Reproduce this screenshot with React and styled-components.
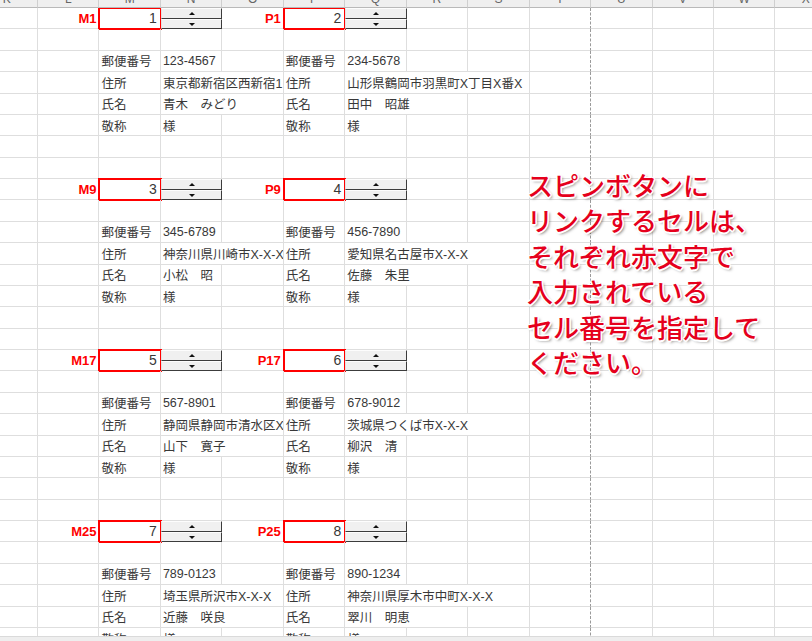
import React from "react";
import styled, { createGlobalStyle } from "styled-components";

const COL_W = 61.46;
const ROW_H = 21.375;
const COLS = 14;
const ROWS = 30;
const PAGE_BREAK_COL = 9;
const LETTERS = ["K", "L", "M", "N", "O", "P", "Q", "R", "S", "T", "U", "V", "W", "X"];

const GlobalStyle = createGlobalStyle`
  html, body { margin: 0; padding: 0; background: #fff; }
  body { font-family: "Liberation Sans", "Noto Sans CJK JP", sans-serif; }
`;

const Page = styled.div`
  position: relative;
  width: 812px;
  height: 641px;
  overflow: hidden;
  display: flex;
  flex-direction: column;
  background: #fff;
`;

const ColumnHeader = styled.div`
  flex: none;
  display: grid;
  grid-template-columns: repeat(${COLS}, ${COL_W}px);
  height: 8px;
  margin-left: -23.46px;
  background: #efefef;
`;

const HeaderCell = styled.div`
  box-sizing: border-box;
  height: 8px;
  overflow: hidden;
  display: flex;
  align-items: flex-end;
  justify-content: center;
  border-right: 1px solid #cfcfcf;
  border-bottom: 1px solid #b9b9b9;
  color: #666;
  font-size: 12px;
  span {
    line-height: 12px;
    margin-bottom: 2.5px;
  }
`;

const Sheet = styled.div`
  flex: 1;
  overflow: hidden;
`;

const SheetGrid = styled.div`
  display: grid;
  grid-template-columns: repeat(${COLS}, ${COL_W}px);
  grid-auto-rows: ${ROW_H}px;
  margin-left: -23.46px;
`;

const Cell = styled.div`
  box-sizing: border-box;
  grid-column: span ${(p) => p.$span || 1};
  display: flex;
  align-items: center;
  justify-content: ${(p) => (p.$right ? "flex-end" : "flex-start")};
  padding: 0 2px;
  border-right: 1px ${(p) => (p.$dashed ? "dashed #9a9a9a" : "solid #dedede")};
  border-bottom: 1px solid #dedede;
  white-space: nowrap;
  overflow: hidden;
  font-size: 12.5px;
  color: #383838;
`;

const RefLabel = styled(Cell)`
  justify-content: flex-end;
  padding-right: 2px;
  color: #ff0000;
  font-weight: bold;
  font-size: 13px;
`;

const LinkCell = styled(Cell)`
  justify-content: flex-end;
  padding-right: 3px;
  font-size: 14px;
  outline: 2px solid #ff0000;
  outline-offset: -1px;
  overflow: visible;
`;

const SpinCell = styled(Cell)`
  position: relative;
  overflow: visible;
`;

const Spinner = styled.div`
  position: absolute;
  top: 0;
  left: 0;
  right: -1px;
  bottom: -1px;
  z-index: 1;
  display: flex;
  flex-direction: column;
`;

const SpinHalf = styled.div`
  box-sizing: border-box;
  flex: 1;
  display: flex;
  align-items: center;
  justify-content: center;
  background: #f0f0f0;
  border-top: 1px solid #fdfdfd;
  border-left: 1px solid #e2e2e2;
  border-right: 1.5px solid #3c3c3c;
  border-bottom: 1.5px solid #3c3c3c;
`;

const Arrow = styled.div`
  width: 0;
  height: 0;
  border-left: 3px solid transparent;
  border-right: 3px solid transparent;
  ${(p) =>
    p.$down ? "border-top: 3px solid #111;" : "border-bottom: 3px solid #111;"}
`;

const BottomBar = styled.div`
  flex: none;
  height: 5px;
  box-sizing: border-box;
  background: #eeeeee;
  border-top: 1px solid #dadada;
`;

const Callout = styled.div`
  position: absolute;
  left: 527px;
  top: 167px;
  z-index: 2;
  font-family: "Noto Sans CJK JP", sans-serif;
  font-size: 26px;
  font-weight: 500;
  line-height: 35.4px;
  color: #e5001c;
  white-space: nowrap;
  text-shadow: 1px 1px 0 #fff, -1px -1px 0 #fff, 1px -1px 0 #fff,
    -1px 1px 0 #fff, 0 1.5px 0 #fff, 1.5px 0 0 #fff, 0 -1.5px 0 #fff,
    -1.5px 0 0 #fff, 2px 2px 3px rgba(0, 0, 0, 0.5);
`;

const LABELS = ["郵便番号", "住所", "氏名", "敬称"];

const BLOCKS = [
  {
    row: 1,
    m: 1,
    p: 2,
    left: [["123-4567", 1], ["東京都新宿区西新宿1", 2], ["青木　みどり", 2], ["様", 1]],
    right: [["234-5678", 1], ["山形県鶴岡市羽黒町X丁目X番X", 3], ["田中　昭雄", 2], ["様", 1]],
  },
  {
    row: 9,
    m: 3,
    p: 4,
    left: [["345-6789", 1], ["神奈川県川崎市X-X-X", 2], ["小松　昭", 1], ["様", 1]],
    right: [["456-7890", 1], ["愛知県名古屋市X-X-X", 3], ["佐藤　朱里", 2], ["様", 1]],
  },
  {
    row: 17,
    m: 5,
    p: 6,
    left: [["567-8901", 1], ["静岡県静岡市清水区X-X-X", 2], ["山下　寛子", 2], ["様", 1]],
    right: [["678-9012", 1], ["茨城県つくば市X-X-X", 3], ["柳沢　清", 1], ["様", 1]],
  },
  {
    row: 25,
    m: 7,
    p: 8,
    left: [["789-0123", 1], ["埼玉県所沢市X-X-X", 2], ["近藤　咲良", 2], ["様", 1]],
    right: [["890-1234", 1], ["神奈川県厚木市中町X-X-X", 3], ["翠川　明恵", 2], ["様", 1]],
  },
];

function specsForRow(r) {
  const specs = {};
  for (const b of BLOCKS) {
    if (r === b.row) {
      specs[1] = { kind: "ref", text: `M${b.row}` };
      specs[2] = { kind: "link", text: String(b.m) };
      specs[3] = { kind: "spin" };
      specs[4] = { kind: "ref", text: `P${b.row}` };
      specs[5] = { kind: "link", text: String(b.p) };
      specs[6] = { kind: "spin" };
    }
    const i = r - b.row - 2;
    if (i >= 0 && i < 4) {
      specs[2] = { kind: "text", text: LABELS[i] };
      specs[3] = { kind: "text", text: b.left[i][0], span: b.left[i][1] };
      specs[5] = { kind: "text", text: LABELS[i] };
      specs[6] = { kind: "text", text: b.right[i][0], span: b.right[i][1] };
    }
  }
  return specs;
}

function Row({ r }) {
  const specs = specsForRow(r);
  const out = [];
  let c = 0;
  while (c < COLS) {
    const s = specs[c];
    const key = `${r}-${c}`;
    if (!s) {
      out.push(<Cell key={key} $dashed={c === PAGE_BREAK_COL} />);
      c += 1;
      continue;
    }
    const span = s.span || 1;
    const dashed = c + span - 1 === PAGE_BREAK_COL;
    if (s.kind === "ref") {
      out.push(<RefLabel key={key}>{s.text}</RefLabel>);
    } else if (s.kind === "link") {
      out.push(<LinkCell key={key}>{s.text}</LinkCell>);
    } else if (s.kind === "spin") {
      out.push(
        <SpinCell key={key}>
          <Spinner>
            <SpinHalf>
              <Arrow />
            </SpinHalf>
            <SpinHalf>
              <Arrow $down />
            </SpinHalf>
          </Spinner>
        </SpinCell>
      );
    } else {
      out.push(
        <Cell key={key} $span={span} $dashed={dashed}>
          {s.text}
        </Cell>
      );
    }
    c += span;
  }
  return out;
}

export default function App() {
  const rows = Array.from({ length: ROWS }, (_, i) => i + 1);
  return (
    <Page>
      <GlobalStyle />
      <ColumnHeader>
        {LETTERS.map((l) => (
          <HeaderCell key={l}>
            <span>{l}</span>
          </HeaderCell>
        ))}
      </ColumnHeader>
      <Sheet>
        <SheetGrid>
          {rows.map((r) => (
            <Row key={r} r={r} />
          ))}
        </SheetGrid>
      </Sheet>
      <BottomBar />
      <Callout>
        スピンボタンに
        <br />
        リンクするセルは、
        <br />
        それぞれ赤文字で
        <br />
        入力されている
        <br />
        セル番号を指定して
        <br />
        ください。
      </Callout>
    </Page>
  );
}
